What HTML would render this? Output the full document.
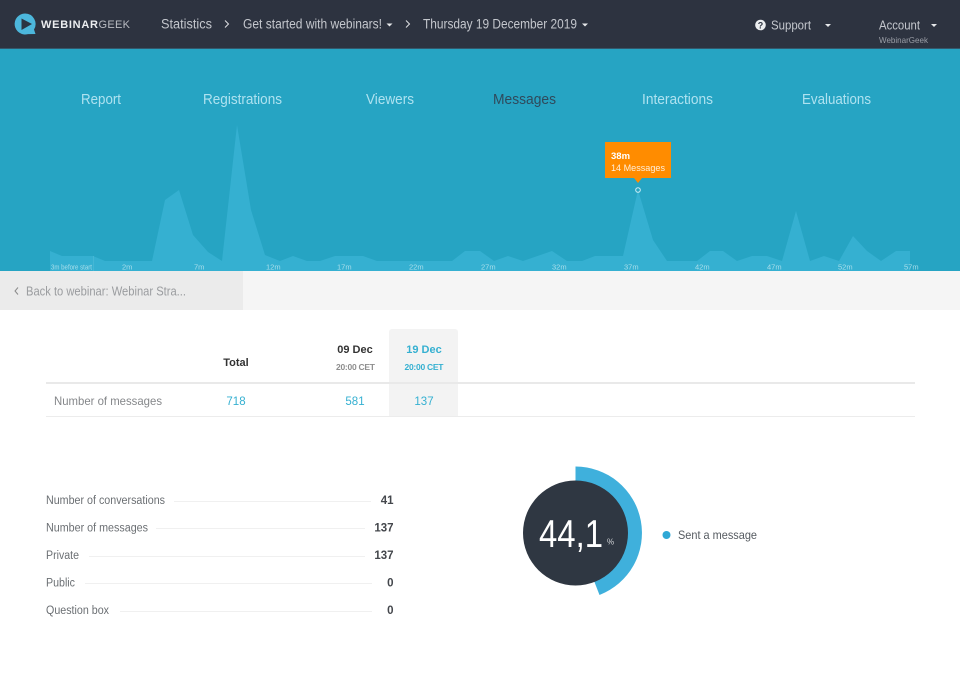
<!DOCTYPE html>
<html>
<head>
<meta charset="utf-8">
<title>WebinarGeek statistics</title>
<style>
html,body{margin:0;padding:0;background:#fff;width:960px;height:673px;overflow:hidden}
svg{display:block}
text{font-family:"Liberation Sans",Arial,sans-serif}
.h{font-size:13.5px;fill:#c4c7cd}
.n{font-size:14.5px;fill:#aee2f0}
.x{font-size:7.5px;fill:#a9deeb}
.l{font-size:11.5px;fill:#6b6f73}
.v{font-size:11.5px;font-weight:bold;fill:#44474c;text-anchor:end}
.c{font-size:11.5px;fill:#35b0d1}
</style>
</head>
<body>
<svg width="960" height="673" viewBox="0 0 960 673" xmlns="http://www.w3.org/2000/svg">
<rect width="960" height="673" fill="#fff"/>
<rect width="960" height="48" fill="#2d3340"/>
<rect y="48" width="960" height="1" fill="#33586c"/>
<rect y="49" width="960" height="222" fill="#26a4c3"/>

<!-- logo -->
<path d="M25 13.500a10.500 10.500 0 1 0 3 20.600L35.500 34 34 29.500A10.500 10.500 0 0 0 25 13.500Z" fill="#4cb7dc"/>
<path d="M21.500 18.500L32 24 21.500 30Z" fill="#2b3442"/>
<text x="41" y="28" textLength="57" lengthAdjust="spacing" style="font-size:11px;font-weight:bold;fill:#eceef0">WEBINAR</text>
<text x="98.500" y="28" textLength="31.500" lengthAdjust="spacing" style="font-size:11px;fill:#b9bcc2">GEEK</text>

<!-- header -->
<text class="h" x="161" y="28.500" textLength="51" lengthAdjust="spacingAndGlyphs">Statistics</text>
<path d="M225 20.500L228.500 24 225 27.500" fill="none" stroke="#dfe1e4" stroke-width="1"/>
<text class="h" x="243" y="28.500" textLength="139" lengthAdjust="spacingAndGlyphs">Get started with webinars!</text>
<path d="M386.500 23.500H392.500L389.500 26.500Z" fill="#e6e8ea"/>
<path d="M406 20.500L409.500 24 406 27.500" fill="none" stroke="#dfe1e4" stroke-width="1"/>
<text class="h" x="423" y="28.500" textLength="154" lengthAdjust="spacingAndGlyphs">Thursday 19 December 2019</text>
<path d="M582 23.500H588L585 26.500Z" fill="#e6e8ea"/>
<circle cx="760.500" cy="25" r="5.300" fill="#eceef0"/>
<text x="760.500" y="28.300" text-anchor="middle" style="font-size:9px;font-weight:bold;fill:#2d3340">?</text>
<text class="h" x="771" y="29.500" textLength="40" lengthAdjust="spacingAndGlyphs" style="font-size:13px">Support</text>
<path d="M825 24H831L828 27Z" fill="#e6e8ea"/>
<text class="h" x="879" y="29.500" textLength="41" lengthAdjust="spacingAndGlyphs" style="font-size:13px">Account</text>
<path d="M931 24H937L934 27Z" fill="#e6e8ea"/>
<text x="879" y="43" textLength="49" lengthAdjust="spacingAndGlyphs" style="font-size:8.500px;fill:#9a9ea6">WebinarGeek</text>

<!-- nav -->
<text class="n" x="81" y="104" textLength="40" lengthAdjust="spacingAndGlyphs">Report</text>
<text class="n" x="203" y="104" textLength="79" lengthAdjust="spacingAndGlyphs">Registrations</text>
<text class="n" x="366" y="104" textLength="48" lengthAdjust="spacingAndGlyphs">Viewers</text>
<text class="n" x="493" y="104" textLength="63" lengthAdjust="spacingAndGlyphs" style="fill:#2f4a5c">Messages</text>
<text class="n" x="642" y="104" textLength="71" lengthAdjust="spacingAndGlyphs">Interactions</text>
<text class="n" x="802" y="104" textLength="69" lengthAdjust="spacingAndGlyphs">Evaluations</text>

<!-- chart -->
<path fill="#35b0d1" d="M50 271V251L62 256H93L105 261H152L165 200L179 190L193 235L208 252L222 261L237 125L251 210L265 255L280 261L293 256L307 261L320 261L335 256H363L377 261H452L465 251H480L494 261L508 256L523 261L552 251L567 261H582L595 256H623L638 190L653 240L667 261H697L710 251H723L737 261L752 256H767L782 261L796 211L810 261L824 256L839 261L853 236L867 251L881 261L896 251H910V271Z"/>
<rect x="93" y="256" width="1" height="15" fill="#45b7d5"/>
<text class="x" x="51" y="269.500" textLength="41" lengthAdjust="spacingAndGlyphs">3m before start</text>
<text class="x" x="122" y="269.500">2m</text>
<text class="x" x="194" y="269.500">7m</text>
<text class="x" x="266" y="269.500">12m</text>
<text class="x" x="337" y="269.500">17m</text>
<text class="x" x="409" y="269.500">22m</text>
<text class="x" x="481" y="269.500">27m</text>
<text class="x" x="552" y="269.500">32m</text>
<text class="x" x="624" y="269.500">37m</text>
<text class="x" x="695" y="269.500">42m</text>
<text class="x" x="767" y="269.500">47m</text>
<text class="x" x="838" y="269.500">52m</text>
<text class="x" x="904" y="269.500">57m</text>
<circle cx="638" cy="190" r="2.300" fill="#26a4c3" stroke="#cfeef6" stroke-width="1"/>
<path d="M605 142H671V178H642L638 183 634 178H605Z" fill="#ff8c00"/>
<text x="611" y="159" style="font-size:9.500px;font-weight:bold;fill:#fff">38m</text>
<text x="611" y="171" textLength="54" lengthAdjust="spacingAndGlyphs" style="font-size:9.500px;fill:#ffeeda">14 Messages</text>

<!-- back bar -->
<rect y="271" width="960" height="39" fill="#f5f5f5"/>
<rect y="271" width="243" height="39" fill="#ebebeb"/>
<path d="M18 287.500L15 291 18 294.500" fill="none" stroke="#8a8a8a" stroke-width="1"/>
<text x="26" y="295.500" textLength="160" lengthAdjust="spacingAndGlyphs" style="font-size:13px;fill:#9a9c9f">Back to webinar: Webinar Stra...</text>

<!-- table -->
<path d="M389 332a3 3 0 0 1 3-3H455a3 3 0 0 1 3 3V416H389Z" fill="#f3f3f3"/>
<rect x="46" y="382" width="869" height="2" fill="#e9e9e9"/>
<rect x="46" y="416" width="869" height="1" fill="#ececec"/>
<text x="236" y="366" text-anchor="middle" style="font-size:11px;font-weight:bold;fill:#333">Total</text>
<text x="355" y="353" text-anchor="middle" style="font-size:11px;font-weight:bold;fill:#333">09 Dec</text>
<text x="355.500" y="370" text-anchor="middle" textLength="39" lengthAdjust="spacing" style="font-size:8.500px;font-weight:bold;fill:#8e8e8e">20:00 CET</text>
<text x="424" y="353" text-anchor="middle" style="font-size:11px;font-weight:bold;fill:#35b0d1">19 Dec</text>
<text x="424" y="370" text-anchor="middle" textLength="39" lengthAdjust="spacing" style="font-size:8.500px;font-weight:bold;fill:#35b0d1">20:00 CET</text>
<text x="54" y="405" textLength="108" lengthAdjust="spacingAndGlyphs" style="font-size:12px;fill:#85878a">Number of messages</text>
<text class="c" x="236" y="405" text-anchor="middle">718</text>
<text class="c" x="355" y="405" text-anchor="middle">581</text>
<text class="c" x="424" y="405" text-anchor="middle">137</text>

<!-- stats -->
<g fill="#f0f0f0">
<rect x="174" y="501" width="197" height="1"/>
<rect x="156" y="528" width="209" height="1"/>
<rect x="89" y="556" width="276" height="1"/>
<rect x="85" y="583" width="287" height="1"/>
<rect x="120" y="611" width="252" height="1"/>
</g>
<text class="l" x="46" y="504" textLength="119" lengthAdjust="spacingAndGlyphs">Number of conversations</text>
<text class="l" x="46" y="531.500" textLength="102" lengthAdjust="spacingAndGlyphs">Number of messages</text>
<text class="l" x="46" y="559" textLength="33" lengthAdjust="spacingAndGlyphs">Private</text>
<text class="l" x="46" y="586.500" textLength="29" lengthAdjust="spacingAndGlyphs">Public</text>
<text class="l" x="46" y="614" textLength="63" lengthAdjust="spacingAndGlyphs">Question box</text>
<text class="v" x="393.500" y="504">41</text>
<text class="v" x="393.500" y="531.500">137</text>
<text class="v" x="393.500" y="559">137</text>
<text class="v" x="393.500" y="586.500">0</text>
<text class="v" x="393.500" y="614">0</text>

<!-- donut -->
<path d="M575.500 466.500A66.500 66.500 0 0 1 599.500 595L575.500 533Z" fill="#3fb0dc"/>
<circle cx="575.500" cy="533" r="52.500" fill="#2f3742"/>
<text x="539" y="547" textLength="64" lengthAdjust="spacingAndGlyphs" style="font-size:39px;fill:#fff">44,1</text>
<text x="607" y="544.500" style="font-size:8px;fill:#d5d7da">%</text>
<circle cx="666.500" cy="535" r="4" fill="#2fa8d5"/>
<text x="678" y="539" textLength="79" lengthAdjust="spacingAndGlyphs" style="font-size:12px;fill:#555a60">Sent a message</text>
</svg>
</body>
</html>
